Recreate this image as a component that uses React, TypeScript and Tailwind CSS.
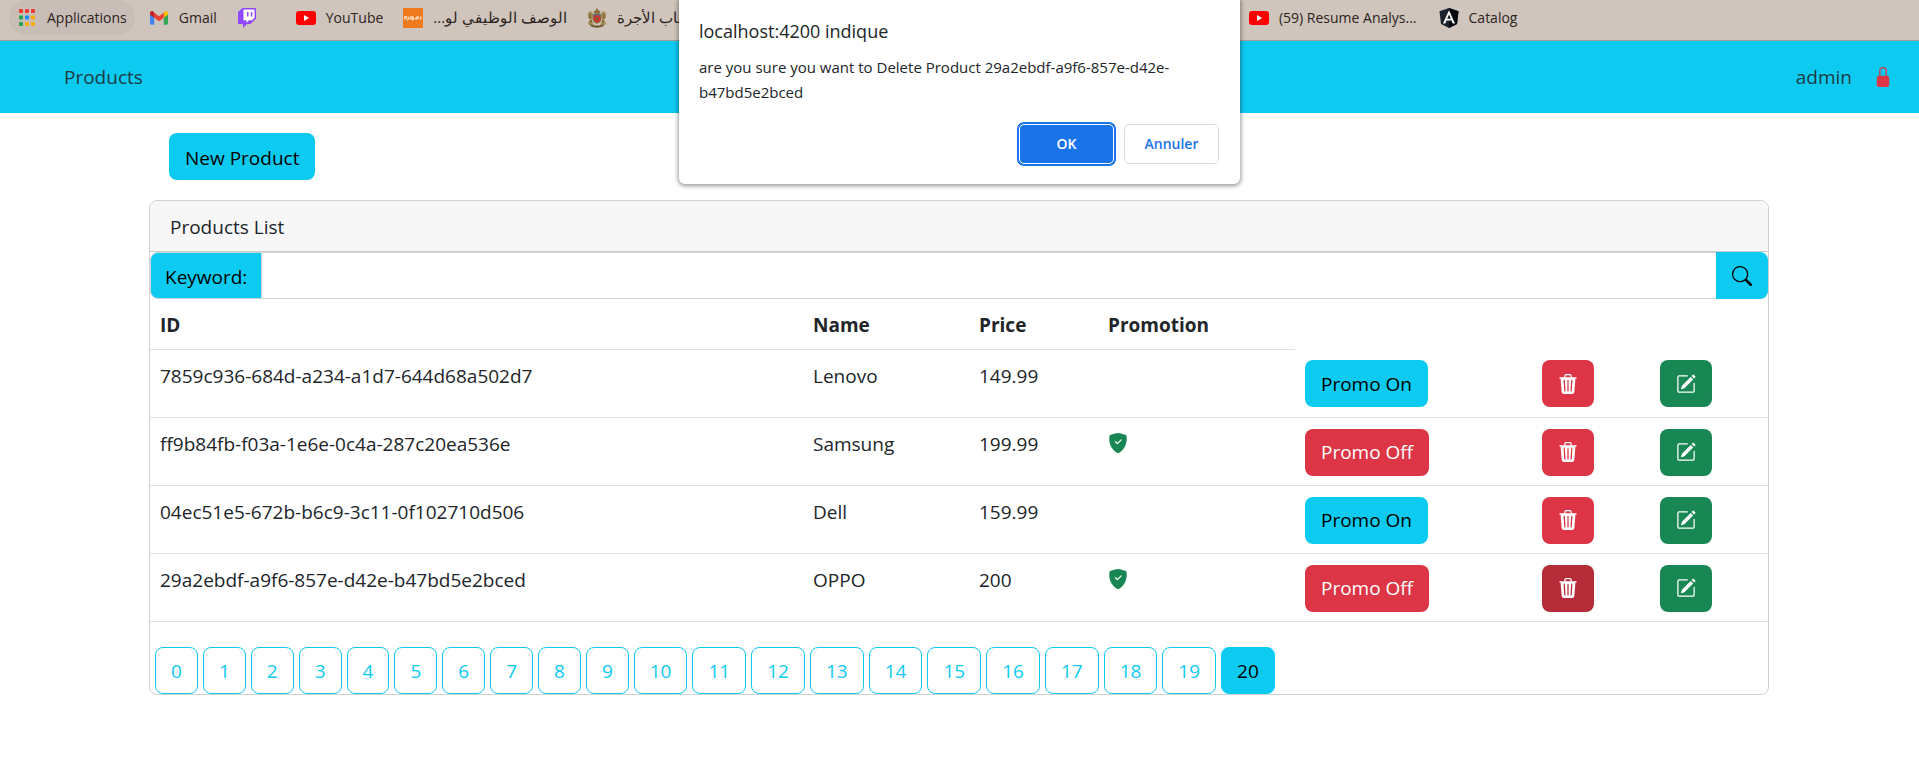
import type { ReactNode } from "react";
import { BsLockFill, BsPencilSquare, BsSearch, BsShieldFillCheck, BsTrash3Fill } from "react-icons/bs";

const font = "font-['Open_Sans','Noto_Sans',sans-serif]";

function AppsIcon() {
  const colors = ["#f33b30", "#f33b30", "#f33b30", "#2ba24c", "#1a8cff", "#f9ab00", "#2ba24c", "#f9ab00", "#f9ab00"];
  return (
    <svg width="20" height="20" viewBox="0 0 20 20" aria-hidden="true">
      {colors.map((c, i) => (
        <rect key={i} x={2 + (i % 3) * 6} y={1 + Math.floor(i / 3) * 6.5} width="4" height="4" rx="0.8" fill={c} />
      ))}
    </svg>
  );
}

function GmailIcon() {
  return (
    <svg width="20" height="20" viewBox="0 0 20 20" aria-hidden="true">
      <path d="M1 5.5V15.6c0 .7.6 1.2 1.2 1.2H5.2V8.5z" fill="#4285f4" />
      <path d="M19 5.5V15.6c0 .7-.6 1.2-1.2 1.2H14.8V8.5z" fill="#34a853" />
      <path d="M14.8 4.6V9.7L19 6.5V5c0-1.7-1.8-2.5-3.1-1.5z" fill="#fbbc04" />
      <path d="M5.2 9.7V4.6L10 8.2l4.8-3.6v5.1L10 13.3z" fill="#ea4335" />
      <path d="M1 5v1.5l4.2 3.2V4.6L4.1 3.5C2.8 2.5 1 3.3 1 5z" fill="#c5221f" />
    </svg>
  );
}

function TwitchIcon() {
  return (
    <svg width="20" height="20" viewBox="0 0 20 20" aria-hidden="true">
      <path d="M5.5 0L1 4v12h5v4l4-4h3.5L19 10.500V0z" fill="#9147ff" />
      <path d="M6.5 1.500H17.500V9.700L15 12.300H12L9.500 14.800V12.300H6.500z" fill="#fff" />
      <path d="M10 4h1.500v4.500H10zM13.800 4h1.500v4.500h-1.500z" fill="#9147ff" />
    </svg>
  );
}

function YouTubeIcon() {
  return (
    <svg width="20" height="20" viewBox="0 0 20 20" aria-hidden="true">
      <rect x="0" y="3" width="20" height="14" rx="3" fill="#f00" />
      <path d="M8 7l5.200 3L8 13z" fill="#fff" />
    </svg>
  );
}

function OrangeIcon() {
  return (
    <svg width="20" height="20" viewBox="0 0 20 20" aria-hidden="true">
      <rect width="20" height="20" fill="#ef7a1d" />
      <path
        d="M2.500 8.300c-1.300.6-1.300 2.700 0 2.700s1.300-2 0-2.700M5 8.500c.6 1.500.2 3.300-1 4M6.500 11c1.300-3 2.800-3.300 3.300-1.800.3 1.500-1.800 2-3.300 1.800M10.500 9c.2 1.500-.3 3-1.500 3.500M11.500 11h1c1-2.500 2.500-2.800 3-1.700.3 1.300-1.500 1.800-3 1.700M16.500 11c1.800.3 2.300-1.200 1-2.500"
        stroke="#ffe6cf"
        strokeWidth="1.1"
        fill="none"
      />
    </svg>
  );
}

function EmblemIcon() {
  return (
    <svg width="20" height="20" viewBox="0 0 20 20" aria-hidden="true">
      <path d="M10 0l1.500 2.500 2 1-1 2h-5l-1-2 2-1z" fill="#8a6a35" />
      <path d="M2 4c2-1 4 0 4 2.500S4.500 10 5 13l2 4H2l-1-2 2-3C1 10 0 7 2 4zM18 4c-2-1-4 0-4 2.500s1.500 3.500 1 6.500l-2 4h5l1-2-2-3c2-2 3-5 1-8z" fill="#a48c50" />
      <path d="M2.500 6.500l1.500 1M17.500 6.500l-1.500 1M3 14l2-1M17 14l-2-1M2 9.500l2-.5M18 9.500l-2-.5" stroke="#5d4620" />
      <path d="M5.500 7C6 4.500 14 4.500 14.500 7v4c0 3-2.500 4-4.500 5-2-1-4.500-2-4.500-5z" fill="#8d7344" />
      <path d="M6.500 7c1-1.800 6-1.800 7 0v2.500h-7z" fill="#4f7196" />
      <path d="M6.500 9l2-2h3l2 2v2.500c0 1.500-2 2.500-3.500 3-1.500-.5-3.500-1.500-3.500-3z" fill="#c8382e" />
      <path d="M10 9l1.200 2.500H8.800z" fill="#2e7a45" />
      <path d="M3 16c4 2 10 2 14 0l-1 2.500c-4 1.500-8 1.500-12 0z" fill="#6f552a" />
    </svg>
  );
}

function AngularIcon() {
  return (
    <svg width="20" height="20" viewBox="0 0 20 20" aria-hidden="true">
      <path d="M10 0L19.500 3.300 18 16 10 20 2 16 .5 3.300z" fill="#1c2430" />
      <path d="M10 0L19.500 3.300 18 16 10 20z" fill="#05070c" />
      <path d="M10 2.300L4 15.500h2.300l1.200-3h5l1.200 3H16zm0 4.200l1.800 4.200H8.200z" fill="#fff" />
    </svg>
  );
}

function Bookmark({ icon, children, label, className = "" }: { icon: ReactNode; children?: ReactNode; label?: string; className?: string }) {
  return (
    <a
      href="#"
      aria-label={label}
      className={`flex h-[35px] shrink-0 items-center gap-[10px] whitespace-nowrap rounded-full text-[14px] leading-5 text-[#2b2320] ${className}`}
    >
      {icon}
      {children && <span>{children}</span>}
    </a>
  );
}

const products = [
  { id: "7859c936-684d-a234-a1d7-644d68a502d7", name: "Lenovo", price: "149.99", promo: false },
  { id: "ff9b84fb-f03a-1e6e-0c4a-287c20ea536e", name: "Samsung", price: "199.99", promo: true },
  { id: "04ec51e5-672b-b6c9-3c11-0f102710d506", name: "Dell", price: "159.99", promo: false },
  { id: "29a2ebdf-a9f6-857e-d42e-b47bd5e2bced", name: "OPPO", price: "200", promo: true, deleting: true },
];

const btn = "inline-flex h-[47px] items-center justify-center rounded-lg px-4";
const th = "border-b border-[#dee2e6] px-[10px] pt-0.5";
const textCell = "px-[10px] pt-[11px]";
const actionCell = "px-[10px] pt-[11px]";

export default function App() {
  return (
    <div className={`${font} text-[19px] leading-[30px] text-[#212529]`}>
      <nav aria-label="Bookmarks" className="flex h-[41px] items-start overflow-hidden border-b border-[#a39b94] bg-[#cfc5bc]">
        <Bookmark icon={<AppsIcon />} className="ml-[9px] bg-[#c8beb7] px-2">Applications</Bookmark>
        <Bookmark icon={<GmailIcon />} className="ml-[14px]">Gmail</Bookmark>
        <Bookmark icon={<TwitchIcon />} label="Twitch" className="ml-[20px]" />
        <Bookmark icon={<YouTubeIcon />} className="ml-[39px]">YouTube</Bookmark>
        <Bookmark icon={<OrangeIcon />} className="ml-[20px]">
          <bdi dir="rtl" className="text-[15px]">الوصف الوظيفي لو...</bdi>
        </Bookmark>
        <Bookmark icon={<EmblemIcon />} className="ml-[20px] w-[642px]">
          <bdi dir="rtl" className="text-[15px]">حساب الأجرة</bdi>
        </Bookmark>
        <Bookmark icon={<YouTubeIcon />} className="ml-[20px]">(59) Resume Analys...</Bookmark>
        <Bookmark icon={<AngularIcon />} className="ml-[22px]">Catalog</Bookmark>
      </nav>

      <header className="flex h-[72px] items-center justify-between bg-[#0dcaf0] pl-16 pr-[26px] text-[#1f3b44]">
        <a href="#">Products</a>
        <div className="flex items-center gap-[21px]">
          <span>admin</span>
          <button type="button" aria-label="Log out" className="text-[#dc3545]">
            <BsLockFill size={20} />
          </button>
        </div>
      </header>

      <main className="mx-auto w-full max-w-[1621px] pr-px pt-5">
        <button type="button" className={`${btn} ml-5 bg-[#0dcaf0] pt-0.5 text-black`}>New Product</button>

        <section className="mt-5 overflow-hidden rounded-lg border border-[#d0d1d2]">
          <h2 className="border-b border-[#c9cbcd] bg-[#f7f7f7] px-5 pb-[9px] pt-[11px]">Products List</h2>
          <form className="flex h-[47px]">
            <label htmlFor="keyword" className="flex items-center rounded-l-lg border border-[#ced4da] bg-[#0dcaf0] px-[14px] pt-0.5 text-black">Keyword:</label>
            <input id="keyword" type="text" className="min-w-0 flex-1 border-y border-[#ced4da] px-4 outline-none" />
            <button type="submit" aria-label="Search" className={`${btn} rounded-l-none bg-[#0dcaf0] text-black`}>
              <BsSearch size={20} />
            </button>
          </form>

          <table className="w-full table-fixed border-collapse text-left">
            <colgroup>
              <col />
              <col className="w-[166px]" />
              <col className="w-[129px]" />
              <col className="w-[197px]" />
              <col className="w-[237px]" />
              <col className="w-[118px]" />
              <col className="w-[118px]" />
            </colgroup>
            <thead>
              <tr className="h-[50px]">
                <th className={th}>ID</th>
                <th className={th}>Name</th>
                <th className={th}>Price</th>
                <th className={th}>Promotion</th>
              </tr>
            </thead>
            <tbody>
              {products.map((p) => (
                <tr key={p.id} className="h-[68px] border-b border-[#dee2e6] align-top">
                  <td className={textCell}>{p.id}</td>
                  <td className={textCell}>{p.name}</td>
                  <td className={textCell}>{p.price}</td>
                  <td className="px-[10px] pt-[15px]">
                    {p.promo && <BsShieldFillCheck size={20} className="text-[#198754]" />}
                  </td>
                  <td className={actionCell}>
                    <button type="button" className={`${btn} align-top ${p.promo ? "bg-[#dc3545] text-white" : "bg-[#0dcaf0] text-black"}`}>
                      {p.promo ? "Promo Off" : "Promo On"}
                    </button>
                  </td>
                  <td className={actionCell}>
                    <button type="button" aria-label={`Delete ${p.name}`} className={`${btn} align-top text-white ${p.deleting ? "bg-[#b52b38]" : "bg-[#dc3545]"}`}>
                      <BsTrash3Fill size={20} />
                    </button>
                  </td>
                  <td className={actionCell}>
                    <button type="button" aria-label={`Edit ${p.name}`} className={`${btn} bg-[#198754] align-top text-white`}>
                      <BsPencilSquare size={20} />
                    </button>
                  </td>
                </tr>
              ))}
            </tbody>
          </table>

          <ul className="mt-[25px] flex flex-wrap gap-[5px] pl-[5px]">
            {Array.from({ length: 21 }, (_, i) => (
              <li key={i}>
                <button type="button" className={`flex h-[47px] items-center rounded-lg border border-[#0dcaf0] px-[15px] pt-0.5 ${i === 20 ? "bg-[#0dcaf0] text-black" : "text-[#0dcaf0]"}`}>
                  {i}
                </button>
              </li>
            ))}
          </ul>
        </section>
      </main>

      <div role="dialog" aria-labelledby="dialog-title" className="absolute inset-x-0 top-0 mx-auto w-[561px] rounded-b-[6px] bg-white pb-5 pl-5 pr-[21px] pt-4 shadow-[0_1px_4px_1px_rgba(0,0,0,0.4)]">
        <h1 id="dialog-title" className="text-[18px] leading-[30px]">localhost:4200 indique</h1>
        <p className="mt-[9px] text-[15px] leading-[25px]">are you sure you want to Delete Product 29a2ebdf-a9f6-857e-d42e-b47bd5e2bced</p>
        <div className="mt-[19px] flex justify-end gap-[10px] text-[14px] font-semibold leading-5">
          <button type="button" className="h-[40px] w-[95px] rounded-[5px] border border-white bg-[#1a73e8] text-white ring-2 ring-[#1a73e8]">OK</button>
          <button type="button" className="h-[40px] w-[95px] rounded-[5px] border border-[#dadce0] text-[#1a73e8]">Annuler</button>
        </div>
      </div>
    </div>
  );
}
